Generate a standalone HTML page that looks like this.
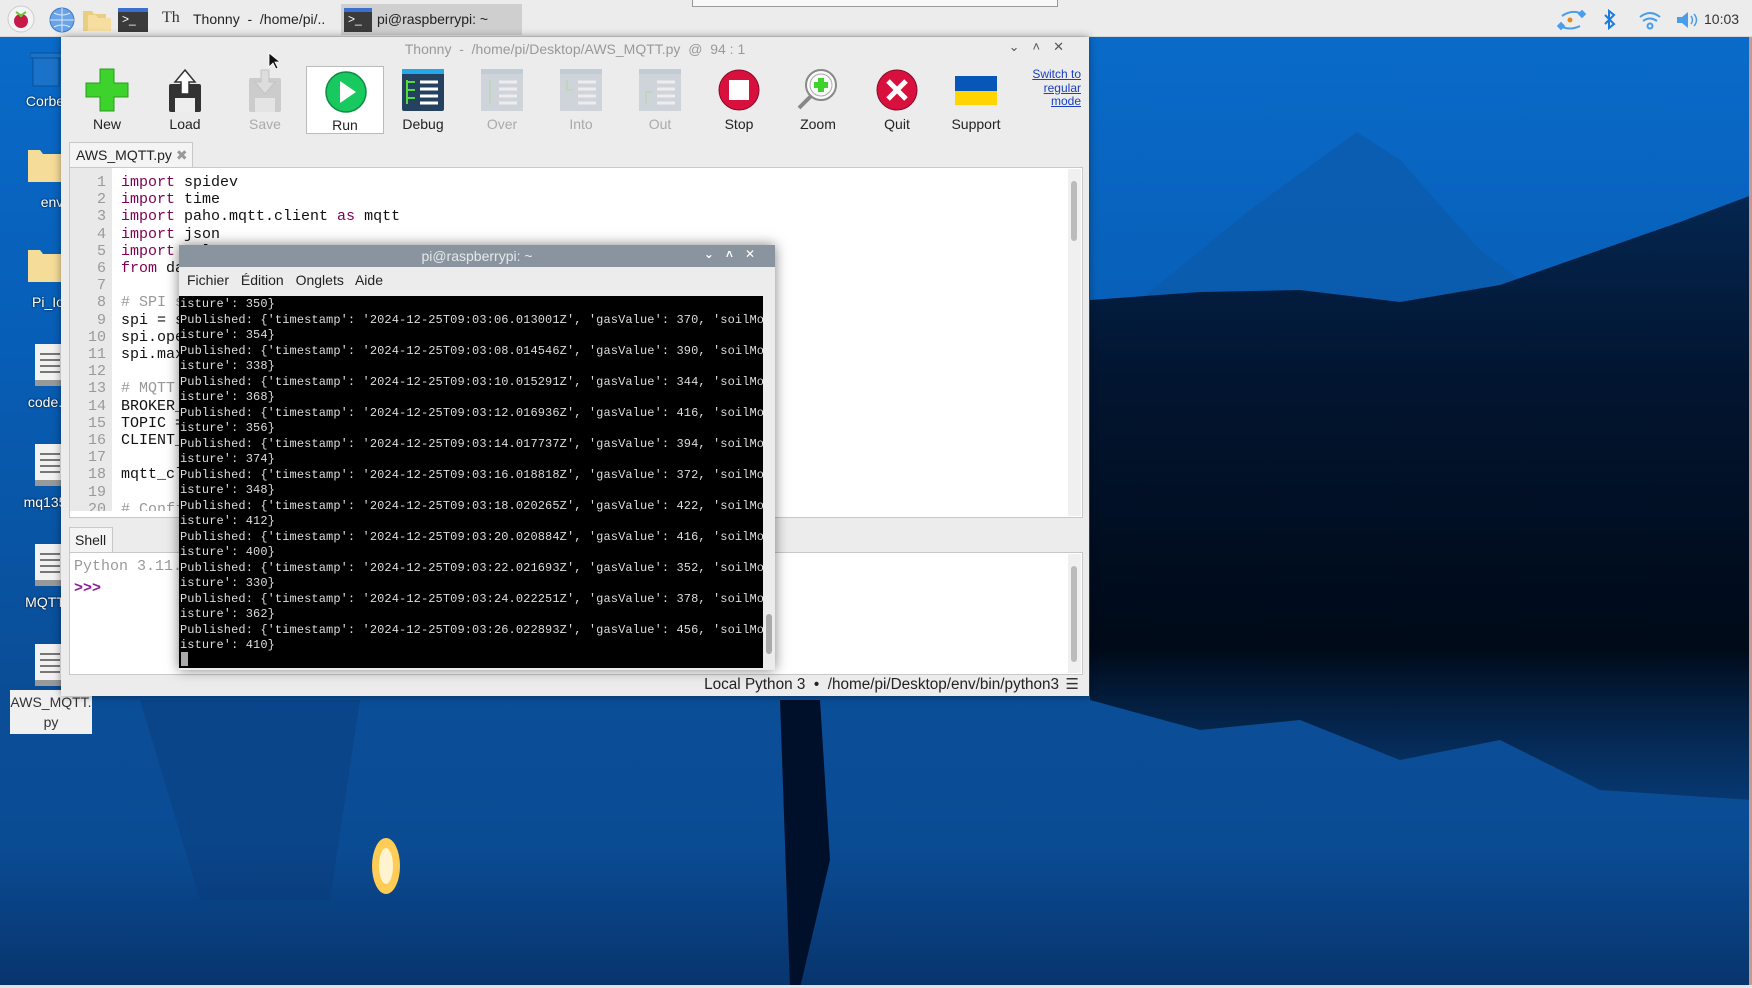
<!DOCTYPE html>
<html><head><meta charset="utf-8">
<style>
*{margin:0;padding:0;box-sizing:border-box}
body{width:1752px;height:988px;overflow:hidden;position:relative;font-family:"Liberation Sans","DejaVu Sans",sans-serif;background:#0a55a8}
.abs{position:absolute}
.panel{left:0;top:0;width:1752px;height:37px;background:#ececec;border-bottom:1px solid #d8d8d8}
.tb{font-size:14px;color:#222;white-space:nowrap}
.win{left:61px;top:37px;width:1028px;height:659px;background:#ececec;box-shadow:0 0 8px rgba(0,0,0,.4)}
.btn{position:absolute;top:28px;width:78px;height:68px;text-align:center}
.btn .lab{position:absolute;left:0;right:0;top:51px;font-size:14px;color:#222}
.btn svg{position:absolute;left:17px;top:3px}
.dis .lab{color:#aaa}
.code{font-family:"Liberation Mono","DejaVu Sans Mono",monospace;font-size:15px;line-height:17.2px;white-space:pre;color:#111}
.kw{color:#7f0055}
.cm{color:#999}
.term{font-family:"Liberation Mono","DejaVu Sans Mono",monospace;font-size:12px;line-height:15.5px;white-space:pre;color:#ddd;letter-spacing:0.1px}
.dlab{color:#fff;font-size:14px;text-align:center;width:90px;text-shadow:0 0 2px #000}
</style></head><body>
<svg class="abs" style="left:0;top:0" width="1752" height="988">
<defs>
<linearGradient id="sky" x1="0" y1="0" x2="0" y2="1">
<stop offset="0" stop-color="#0a6ccb"/><stop offset="0.35" stop-color="#075eb6"/><stop offset="0.7" stop-color="#0a4d96"/><stop offset="1" stop-color="#083a78"/>
</linearGradient>
<linearGradient id="trees" x1="0" y1="0" x2="0" y2="1">
<stop offset="0" stop-color="#042650"/><stop offset="0.3" stop-color="#021530"/><stop offset="0.75" stop-color="#000a18"/><stop offset="1" stop-color="#052a58" stop-opacity="0.6"/>
</linearGradient>
<linearGradient id="water" x1="0" y1="0" x2="0" y2="1">
<stop offset="0" stop-color="#0b4e98"/><stop offset="0.5" stop-color="#0a4c94"/><stop offset="1" stop-color="#08346c"/>
</linearGradient>
</defs>
<rect width="1752" height="988" fill="url(#sky)"/>
<rect x="0" y="700" width="1752" height="288" fill="url(#water)"/>
<path d="M1090 340 L1250 210 L1357 132 L1400 160 L1480 250 L1560 310 L1090 330Z" fill="#0b5aaa" opacity="0.7"/>
<path d="M1090 300 L1200 292 L1300 290 L1400 302 L1500 285 L1600 250 L1680 222 L1752 195 L1752 800 L1600 790 L1500 740 L1400 760 L1300 720 L1200 730 L1090 700Z" fill="url(#trees)"/>
<path d="M780 700 L820 700 L830 860 L800 988 L790 988 Z" fill="#01102a"/>
<path d="M140 700 L360 700 L330 900 L200 900 Z" fill="#0a3a78" opacity="0.4"/>
<ellipse cx="386" cy="866" rx="14" ry="28" fill="#ffcc55"/>
<ellipse cx="386" cy="866" rx="7" ry="18" fill="#fff3d0"/>
<rect x="1749" y="0" width="3" height="988" fill="#c49a92"/>
<rect x="0" y="985" width="1752" height="3" fill="#dfe3ea"/>
</svg>

<div class="abs panel"></div>
<div class="abs" style="left:692px;top:0;width:366px;height:7px;background:#f8f8f8;border:1px solid #999;border-top:0"></div>
<svg class="abs" style="left:6px;top:4px" width="30" height="30"><circle cx="15" cy="15" r="13" fill="#f4f4f4" stroke="#ccc"/><circle cx="15" cy="17" r="7" fill="#c51a4a"/><path d="M10 8 q5 3 5 5 q0-2 5-5" stroke="#6c3" stroke-width="2" fill="none"/></svg>
<svg class="abs" style="left:48px;top:6px" width="28" height="28"><circle cx="14" cy="14" r="12" fill="#6aa3e8" stroke="#3b7ac7"/><path d="M2 14h24M14 2v24M6 7q8 4 16 0M6 21q8-4 16 0" stroke="#dbe9fb" fill="none"/></svg>
<svg class="abs" style="left:82px;top:8px" width="30" height="24"><path d="M1 3h9l2 3h12v17H1z" fill="#e8cf80"/><path d="M6 7h8l2 3h13v13H6z" fill="#f5dea0"/></svg>
<div class="abs" style="left:118px;top:8px;width:30px;height:24px;background:#3a3a3a;border-top:4px solid #3b6fd0;color:#fff;font-size:12px;padding-left:4px">&gt;_</div>
<div class="abs tb" style="left:162px;top:9px;font-size:16px;font-family:'Liberation Serif',serif;color:#333">Th</div>
<div class="abs tb" style="left:193px;top:11px">Thonny &nbsp;- &nbsp;/home/pi/..</div>
<div class="abs" style="left:341px;top:4px;width:181px;height:31px;background:#cfcfcf"></div>
<div class="abs" style="left:344px;top:8px;width:28px;height:24px;background:#3a3a3a;border-top:4px solid #3b6fd0;color:#fff;font-size:12px;padding-left:4px">&gt;_</div>
<div class="abs tb" style="left:377px;top:11px">pi@raspberrypi: ~</div>
<svg class="abs" style="left:1555px;top:8px" width="175" height="24">
<path d="M7 8 q10-7 20-2" stroke="#4a9de8" stroke-width="2" fill="none"/><path d="M5 18 q10 5 20 0" stroke="#4a9de8" stroke-width="2" fill="none"/><rect x="24" y="3" width="6" height="6" transform="rotate(45 27 6)" fill="#4a9de8"/><rect x="3" y="15" width="6" height="6" transform="rotate(45 6 18)" fill="#4a9de8"/><circle cx="15" cy="12" r="2.5" fill="#e38a1c"/>
<path d="M50 7l9 9-5 4V3l5 4-9 9" stroke="#1a7be0" stroke-width="2" fill="none"/>
<path d="M85 9q10-8 20 0M88 13q7-5 14 0" stroke="#4a9de8" stroke-width="2" fill="none"/><circle cx="95" cy="18" r="2.5" fill="none" stroke="#4a9de8" stroke-width="2"/>
<path d="M122 9h5l6-5v16l-6-5h-5z" fill="#4a9de8"/><path d="M136 8q3 4 0 8M139 6q5 6 0 12" stroke="#4a9de8" stroke-width="1.5" fill="none"/>
</svg>
<div class="abs tb" style="left:1704px;top:11px;color:#333">10:03</div>

<svg class="abs" style="left:30px;top:50px" width="32" height="38"><rect x="3" y="6" width="26" height="30" fill="#1a73c8" stroke="#0d4f95"/><rect x="0" y="3" width="32" height="5" fill="#1a73c8" stroke="#0d4f95"/></svg>
<div class="abs dlab" style="left:0;top:93px">Corbe</div>
<svg class="abs" style="left:28px;top:146px" width="34" height="36"><path d="M0 4h12l3 4h19v28H0z" fill="#f5dc98"/></svg>
<div class="abs dlab" style="left:7px;top:194px">env</div>
<svg class="abs" style="left:28px;top:246px" width="34" height="36"><path d="M0 4h12l3 4h19v28H0z" fill="#f5dc98"/></svg>
<div class="abs dlab" style="left:3px;top:294px">Pi_Io</div>
<svg class="abs" style="left:35px;top:344px" width="28" height="42"><rect width="28" height="42" fill="#f2f2f2"/><path d="M5 10h20M5 16h20M5 22h20M5 28h20" stroke="#777" stroke-width="2"/><rect y="36" width="28" height="6" fill="#999"/></svg>
<div class="abs dlab" style="left:0;top:394px">code.</div>
<svg class="abs" style="left:35px;top:444px" width="28" height="42"><rect width="28" height="42" fill="#f2f2f2"/><path d="M5 10h20M5 16h20M5 22h20M5 28h20" stroke="#777" stroke-width="2"/><rect y="36" width="28" height="6" fill="#999"/></svg>
<div class="abs dlab" style="left:0;top:494px">mq135</div>
<svg class="abs" style="left:35px;top:544px" width="28" height="42"><rect width="28" height="42" fill="#f2f2f2"/><path d="M5 10h20M5 16h20M5 22h20M5 28h20" stroke="#777" stroke-width="2"/><rect y="36" width="28" height="6" fill="#999"/></svg>
<div class="abs dlab" style="left:0;top:594px">MQTT</div>
<svg class="abs" style="left:35px;top:644px" width="28" height="42"><rect width="28" height="42" fill="#f2f2f2"/><path d="M5 10h20M5 16h20M5 22h20M5 28h20" stroke="#777" stroke-width="2"/><rect y="36" width="28" height="6" fill="#999"/></svg>
<div class="abs" style="left:10px;top:690px;width:82px;height:44px;background:#f0f0f0;font-size:14px;color:#333;text-align:center;line-height:20px;padding-top:2px">AWS_MQTT.<br>py</div>

<div class="abs win">
 <div class="abs" style="left:0;top:0;width:1028px;height:24px;text-align:center;font-size:14px;color:#999;line-height:24px">Thonny &nbsp;- &nbsp;/home/pi/Desktop/AWS_MQTT.py &nbsp;@ &nbsp;94 : 1</div>
 <div class="abs" style="right:12px;top:2px;font-size:13px;color:#555;letter-spacing:13px">⌄˄✕</div>
 <div class="btn" style="left:7px"><svg width="44" height="44"><path d="M15 1h14v14h14v14H29v14H15V29H1V15h14z" fill="#3ed22c" stroke="#2b9a1f"/></svg><div class="lab">New</div></div>
 <div class="btn" style="left:85px"><svg width="44" height="46"><rect x="6" y="16" width="32" height="28" rx="2" fill="#333"/><rect x="12" y="30" width="20" height="14" fill="#eee"/><path d="M22 2l10 12h-6v12h-8V14h-6z" fill="#fff" stroke="#333" stroke-width="1.5"/></svg><div class="lab">Load</div></div>
 <div class="btn dis" style="left:165px"><svg width="44" height="46"><rect x="6" y="10" width="32" height="34" rx="2" fill="#ccc"/><rect x="12" y="30" width="20" height="14" fill="#e4e4e4"/><path d="M22 26l10-12h-6V2h-8v12h-6z" fill="#ddd" stroke="#c4c4c4"/></svg><div class="lab">Save</div></div>
 <div class="btn" style="left:245px;border:1px solid #bbb;background:#fff;top:29px;height:68px"><svg width="44" height="44"><circle cx="22" cy="22" r="20" fill="#18c960" stroke="#0f8a42" stroke-width="1.5"/><path d="M16 11l16 11-16 11z" fill="#fff"/></svg><div class="lab" style="top:50px">Run</div></div>
 <div class="btn" style="left:323px"><svg width="44" height="44"><rect x="1" y="1" width="42" height="42" rx="2" fill="#24425f"/><rect x="1" y="1" width="42" height="5" fill="#26a8e8"/><path d="M19 14h18M19 21h18M19 28h18M19 35h18" stroke="#fff" stroke-width="3"/><path d="M6 12v24M6 14h8M6 22h8M6 30h8" stroke="#56d93a" stroke-width="2" fill="none"/></svg><div class="lab">Debug</div></div>
 <div class="btn dis" style="left:402px"><svg width="44" height="44" opacity="0.55"><rect x="1" y="1" width="42" height="42" fill="#b8c2cc"/><rect x="1" y="1" width="42" height="5" fill="#9fb3c4"/><path d="M19 14h18M19 21h18M19 28h18M19 35h18" stroke="#eee" stroke-width="3"/><path d="M10 12v24" stroke="#9cc49a" stroke-width="2"/></svg><div class="lab">Over</div></div>
 <div class="btn dis" style="left:481px"><svg width="44" height="44" opacity="0.55"><rect x="1" y="1" width="42" height="42" fill="#b8c2cc"/><rect x="1" y="1" width="42" height="5" fill="#9fb3c4"/><path d="M19 14h18M19 21h18M19 28h18M19 35h18" stroke="#eee" stroke-width="3"/><path d="M8 12v10h6" stroke="#9cc49a" stroke-width="2" fill="none"/></svg><div class="lab">Into</div></div>
 <div class="btn dis" style="left:560px"><svg width="44" height="44" opacity="0.55"><rect x="1" y="1" width="42" height="42" fill="#b8c2cc"/><rect x="1" y="1" width="42" height="5" fill="#9fb3c4"/><path d="M19 14h18M19 21h18M19 28h18M19 35h18" stroke="#eee" stroke-width="3"/><path d="M14 24H8v12" stroke="#9cc49a" stroke-width="2" fill="none"/></svg><div class="lab">Out</div></div>
 <div class="btn" style="left:639px"><svg width="44" height="44"><circle cx="22" cy="22" r="20" fill="#d8103e" stroke="#8a0a28"/><rect x="12" y="12" width="20" height="20" fill="#fff"/></svg><div class="lab">Stop</div></div>
 <div class="btn" style="left:718px"><svg width="44" height="44"><circle cx="25" cy="17" r="15" fill="#fafafa" stroke="#888" stroke-width="2"/><circle cx="25" cy="17" r="11" fill="none" stroke="#aaa"/><path d="M15 28L3 40" stroke="#888" stroke-width="4"/><path d="M22 10h6v4h4v6h-4v4h-6v-4h-4v-6h4z" fill="#3ed22c"/></svg><div class="lab">Zoom</div></div>
 <div class="btn" style="left:797px"><svg width="44" height="44"><circle cx="22" cy="22" r="20" fill="#d8103e" stroke="#8a0a28"/><path d="M13 13l18 18M31 13L13 31" stroke="#fff" stroke-width="5"/></svg><div class="lab">Quit</div></div>
 <div class="btn" style="left:876px"><svg width="44" height="44"><rect x="1" y="8" width="42" height="15" fill="#0757b8"/><rect x="1" y="23" width="42" height="14" fill="#ffd400"/></svg><div class="lab">Support</div></div>
 <div class="abs" style="left:938px;top:31px;width:82px;text-align:right;font-size:12px;line-height:13.5px;color:#1a3fbf;text-decoration:underline">Switch to<br>regular<br>mode</div>
 <div class="abs" style="left:8px;top:105px;width:124px;height:25px;background:#f4f4f4;border:1px solid #c8c8c8;border-bottom:0;font-size:14px;padding:4px 0 0 6px;color:#222">AWS_MQTT.py <span style="color:#999">✖</span></div>
 <div class="abs" style="left:8px;top:130px;width:1014px;height:351px;border:1px solid #c8c8c8;background:#fff;overflow:hidden">
  <div class="abs code" style="left:0;top:6px;width:42px;height:337px;background:#e9e9e9;color:#999;text-align:right;padding-right:6px;overflow:hidden">1
2
3
4
5
6
7
8
9
10
11
12
13
14
15
16
17
18
19
20</div>
  <div class="abs" style="left:0;top:0;width:42px;height:6px;background:#e9e9e9"></div>
  <div class="abs code" style="left:51px;top:6px;height:337px;overflow:hidden"><span class="kw">import</span> spidev
<span class="kw">import</span> time
<span class="kw">import</span> paho.mqtt.client <span class="kw">as</span> mqtt
<span class="kw">import</span> json
<span class="kw">import</span> ssl
<span class="kw">from</span> datetime <span class="kw">import</span> datetime

<span class="cm"># SPI setup</span>
spi = spidev.SpiDev()
spi.open(0, 0)
spi.max_speed_hz = 1350000

<span class="cm"># MQTT settings</span>
BROKER_ENDPOINT = ""
TOPIC = "sensor/data"
CLIENT_ID = "raspberrypi"

mqtt_client = mqtt.Client(client_id=CLIENT_ID)

<span class="cm"># Configure TLS</span></div>
  <div class="abs" style="right:1px;top:1px;width:13px;height:347px;background:#f0f0f0"><div style="position:absolute;left:3px;top:12px;width:6px;height:60px;background:#bbb;border-radius:3px"></div></div>
 </div>
 <div class="abs" style="left:8px;top:490px;width:44px;height:25px;background:#f4f4f4;border:1px solid #c8c8c8;border-bottom:0;font-size:14px;padding:4px 0 0 5px;color:#222">Shell</div>
 <div class="abs" style="left:8px;top:515px;width:1014px;height:123px;border:1px solid #c8c8c8;background:#fff">
  <div class="abs code" style="left:4px;top:3px;color:#999;line-height:22px">Python 3.11.2</div>
  <div class="abs code" style="left:4px;top:25px;color:#8b1a9a;font-weight:bold;line-height:22px">&gt;&gt;&gt;</div>
  <div class="abs" style="right:1px;top:1px;width:13px;height:119px;background:#f0f0f0"><div style="position:absolute;left:3px;top:12px;width:6px;height:96px;background:#bbb;border-radius:3px"></div></div>
 </div>
 <div class="abs" style="right:30px;top:639px;font-size:15.3px;color:#222;white-space:nowrap">Local Python 3 &nbsp;• &nbsp;/home/pi/Desktop/env/bin/python3</div>
 <div class="abs" style="right:10px;top:638px;font-size:15px;color:#333">☰</div>
</div>

<div class="abs" style="left:179px;top:245px;width:596px;height:425px;background:#ececec;box-shadow:0 0 12px rgba(0,0,0,.5)">
 <div class="abs" style="left:0;top:0;width:596px;height:22px;background:#8a949e;text-align:center;font-size:14px;line-height:22px;color:#e4e8ec">pi@raspberrypi: ~</div>
 <div class="abs" style="right:8px;top:2px;font-size:12px;color:#fff;letter-spacing:12px;font-weight:bold">⌄˄✕</div>
 <div class="abs" style="left:8px;top:27px;font-size:14px;color:#222;word-spacing:8px">Fichier Édition Onglets Aide</div>
 <div class="abs" style="left:0;top:51px;width:584px;height:372px;background:#000;overflow:hidden">
 <div class="abs term" style="left:1px;top:1px">isture': 350}
Published: {'timestamp': '2024-12-25T09:03:06.013001Z', 'gasValue': 370, 'soilMo
isture': 354}
Published: {'timestamp': '2024-12-25T09:03:08.014546Z', 'gasValue': 390, 'soilMo
isture': 338}
Published: {'timestamp': '2024-12-25T09:03:10.015291Z', 'gasValue': 344, 'soilMo
isture': 368}
Published: {'timestamp': '2024-12-25T09:03:12.016936Z', 'gasValue': 416, 'soilMo
isture': 356}
Published: {'timestamp': '2024-12-25T09:03:14.017737Z', 'gasValue': 394, 'soilMo
isture': 374}
Published: {'timestamp': '2024-12-25T09:03:16.018818Z', 'gasValue': 372, 'soilMo
isture': 348}
Published: {'timestamp': '2024-12-25T09:03:18.020265Z', 'gasValue': 422, 'soilMo
isture': 412}
Published: {'timestamp': '2024-12-25T09:03:20.020884Z', 'gasValue': 416, 'soilMo
isture': 400}
Published: {'timestamp': '2024-12-25T09:03:22.021693Z', 'gasValue': 352, 'soilMo
isture': 330}
Published: {'timestamp': '2024-12-25T09:03:24.022251Z', 'gasValue': 378, 'soilMo
isture': 362}
Published: {'timestamp': '2024-12-25T09:03:26.022893Z', 'gasValue': 456, 'soilMo
isture': 410}</div>
 <div class="abs" style="left:2px;top:356px;width:7px;height:14px;background:#aaa"></div>
 </div>
 <div class="abs" style="left:585px;top:51px;width:11px;height:372px;background:#ececec"><div style="position:absolute;left:2px;top:318px;width:6px;height:40px;background:#aaa;border-radius:3px"></div></div>
</div>
<svg class="abs" style="left:268px;top:52px" width="12" height="18"><path d="M1 1v14l4-4 3 6 2-1-3-6h5z" fill="#111" stroke="#fff" stroke-width="0.8"/></svg>
</body></html>
